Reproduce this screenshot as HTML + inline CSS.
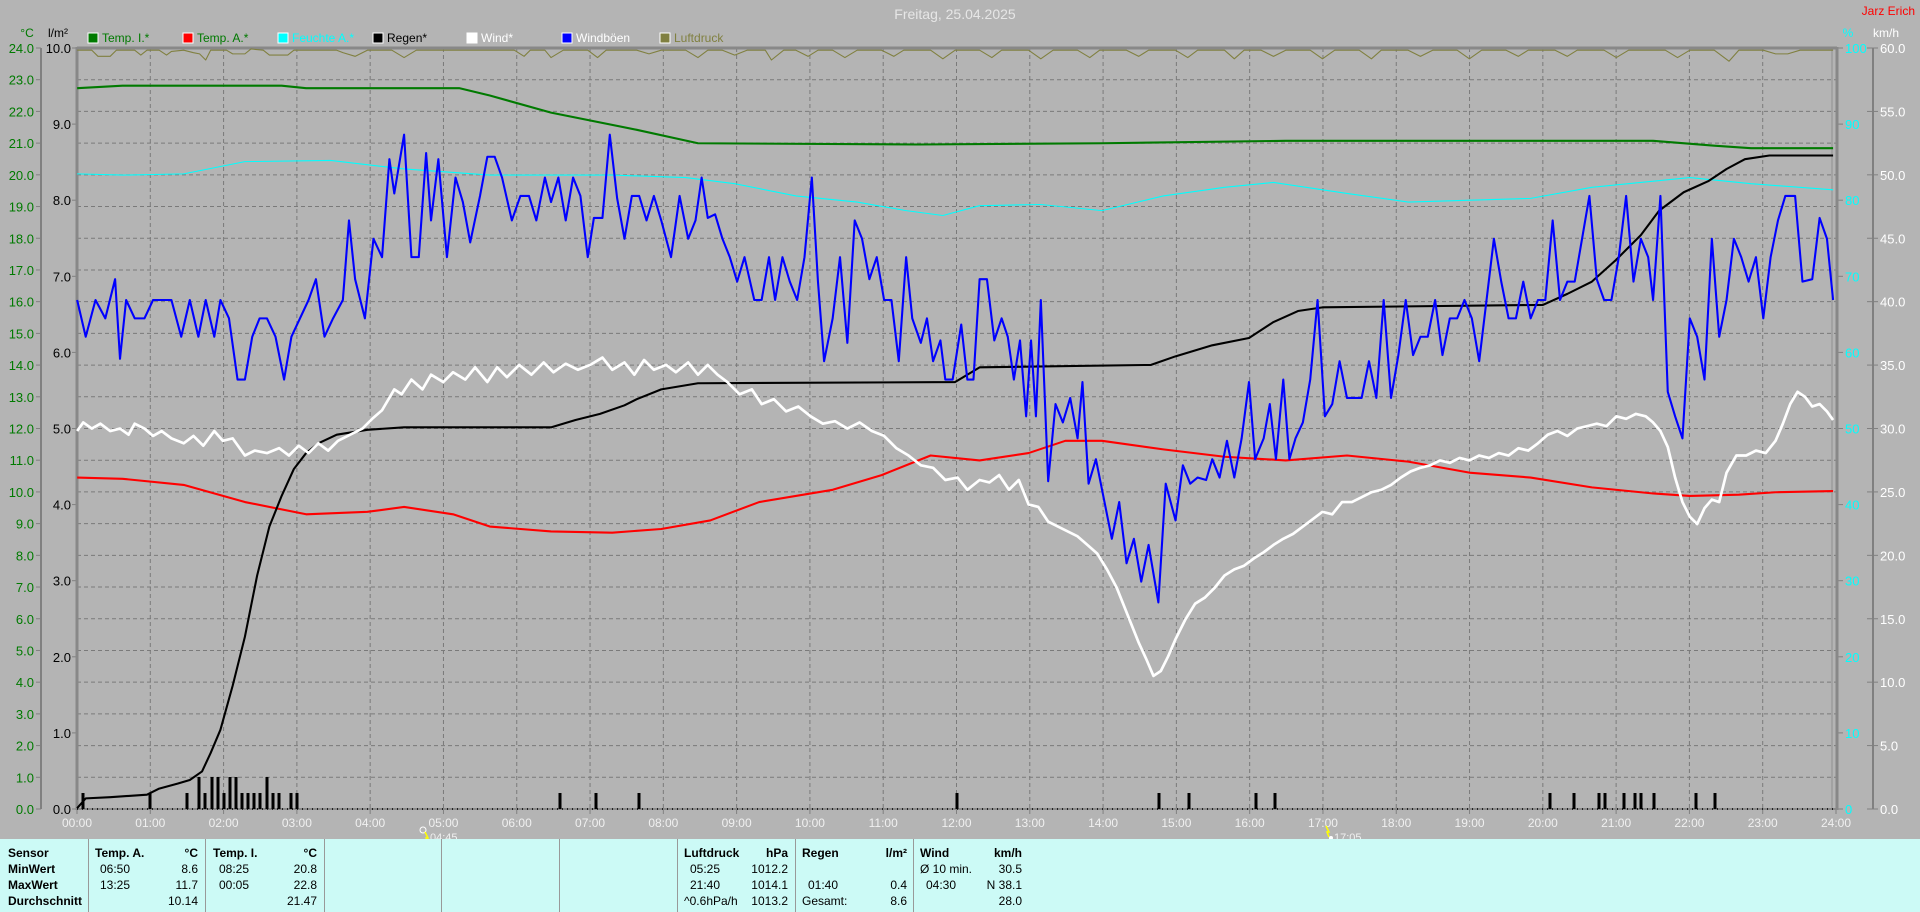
<!DOCTYPE html>
<html><head><meta charset="utf-8"><style>
body{margin:0;background:#b4b4b4;width:1920px;height:912px;overflow:hidden;font-family:"Liberation Sans",sans-serif}
svg{position:absolute;left:0;top:0}
#tbl{position:absolute;left:0;top:839px;width:1920px;height:73px;background:#ccfaf6;font-size:12px;color:#000}
.c{position:absolute;top:0;height:73px;border-left:1px solid #999}
.r{position:absolute;white-space:nowrap}
.b{font-weight:bold}
</style></head><body>
<svg width="1920" height="912" xmlns="http://www.w3.org/2000/svg" font-family="Liberation Sans, sans-serif">
<text x="955" y="19" font-size="14" fill="#e6e6e6" text-anchor="middle">Freitag, 25.04.2025</text>
<text x="1915" y="15" font-size="12" fill="#f00" text-anchor="end">Jarz Erich</text>
<text x="27" y="37" font-size="12" fill="#007a00" text-anchor="middle">°C</text>
<text x="58" y="37" font-size="12" fill="#000" text-anchor="middle">l/m²</text>
<text x="1848" y="37" font-size="12" fill="#0ff" text-anchor="middle">%</text>
<text x="1886" y="37" font-size="12" fill="#fff" text-anchor="middle">km/h</text>
<g font-size="12">
<rect x="88" y="33" width="10" height="10" fill="#007a00" stroke="#fff"/><text x="102" y="42" fill="#007a00">Temp. I.*</text>
<rect x="183" y="33" width="10" height="10" fill="#f00" stroke="#fff"/><text x="197" y="42" fill="#007a00">Temp. A.*</text>
<rect x="278" y="33" width="10" height="10" fill="#0ff" stroke="#fff"/><text x="292" y="42" fill="#0ff">Feuchte A.*</text>
<rect x="373" y="33" width="10" height="10" fill="#000" stroke="#fff"/><text x="387" y="42" fill="#000">Regen*</text>
<rect x="467" y="33" width="10" height="10" fill="#fff" stroke="#fff"/><text x="481" y="42" fill="#fff">Wind*</text>
<rect x="562" y="33" width="10" height="10" fill="#00f" stroke="#fff"/><text x="576" y="42" fill="#fff">Windböen</text>
<rect x="660" y="33" width="10" height="10" fill="#808040" stroke="#fff"/><text x="674" y="42" fill="#808040">Luftdruck</text>
</g>
<g stroke="#7a7a7a" stroke-dasharray="4,3" stroke-width="1" id="grid"></g>
<g id="axes"></g>
<line x1="41" y1="48" x2="41" y2="809" stroke="#808080" stroke-width="2"/>
<line x1="1873" y1="48" x2="1873" y2="809" stroke="#808080" stroke-width="2"/>
<line x1="1832" y1="48" x2="1832" y2="809" stroke="#909090" stroke-width="1"/>
<line x1="77" y1="48" x2="1837" y2="48" stroke="#888" stroke-width="3"/>
<line x1="77" y1="47" x2="77" y2="810" stroke="#888" stroke-width="3"/>
<line x1="1837" y1="47" x2="1837" y2="810" stroke="#888" stroke-width="3"/>
<line x1="77" y1="809" x2="1837" y2="809" stroke="#888" stroke-width="2"/>
<line x1="77" y1="809" x2="1837" y2="809" stroke="#000" stroke-width="1.5" stroke-dasharray="1,4"/>
<g fill="#000" id="bars"></g>
<g transform="scale(1.2245)" fill="none" stroke-linejoin="round">
<polyline stroke="#808040" stroke-width="0.9" points="63,41 75,41 80,46 90,46 95,41 110,41 115,45 120,41 130,41 136,45 140,42 150,41 158,43 163,44 168,49 172,41 185,41 190,44 200,44 205,40 215,41 220,45 235,45 240,41 250,41 260,41 275,41 280,43 290,46 300,41 320,41 330,47 340,41 360,41 380,41 400,41 420,41 428,46 433,41 445,41 450,47 460,41 480,41 488,47 495,41 520,41 530,44 540,41 560,41 570,47 578,41 590,41 600,45 610,41 625,41 630,49 640,41 650,41 660,46 668,41 680,41 690,47 700,41 720,41 730,46 738,41 760,41 770,48 780,41 800,41 810,47 818,41 840,41 850,48 860,41 880,41 890,47 898,41 920,41 930,46 938,41 960,41 970,47 978,41 1000,41 1008,48 1016,41 1030,41 1040,46 1050,41 1070,41 1080,48 1090,41 1110,41 1120,48 1128,41 1150,41 1160,46 1170,41 1190,41 1200,48 1210,41 1230,41 1240,46 1248,41 1270,41 1280,46 1288,41 1310,41 1320,47 1330,41 1360,41 1370,47 1380,41 1400,41 1412,50 1420,41 1440,41 1450,44 1460,44 1470,41 1497,41"/>
<polyline stroke="#0ff" stroke-width="0.9" points="63,142 100,143 150,142 200,132 270,131 330,138 400,143 500,143 560,145 600,150 650,160 700,165 740,172 770,176 800,168 850,167 900,172 950,160 1000,153 1040,149 1100,158 1150,165 1250,162 1300,153 1380,145 1430,150 1497,155"/>
<polyline stroke="#007a00" stroke-width="1.7" points="63,72 100,70 230,70 250,72 375,72 400,78 450,92 520,106 570,117 750,118 900,117 1050,115 1350,115 1400,119 1430,121 1497,121"/>
<polyline stroke="#f00" stroke-width="1.7" points="63,390 100,391 150,396 200,410 250,420 300,418 330,414 370,420 400,430 450,434 500,435 540,432 580,425 620,410 680,400 720,388 760,372 800,376 840,370 870,360 900,360 950,367 1000,373 1050,376 1100,372 1150,377 1200,386 1250,390 1300,398 1350,403 1380,405 1420,404 1450,402 1497,401"/>
<polyline stroke="#000" stroke-width="1.7" points="63,660 70,652 90,651 120,649 130,644 145,640 155,637 165,630 172,615 180,596 190,560 200,520 210,470 220,430 230,405 240,383 250,370 260,362 275,355 300,351 330,349 450,349 470,343 490,338 510,331 520,326 540,318 570,313 780,312 800,300 940,298 960,291 990,282 1020,276 1040,263 1060,254 1080,251 1260,249 1280,240 1300,230 1320,212 1340,192 1355,172 1375,157 1395,148 1410,138 1425,130 1445,127 1497,127"/>
<polyline stroke="#fff" stroke-width="2.2" points="63,352 68,345 75,350 82,346 90,352 98,350 105,355 110,346 118,350 125,356 132,352 140,358 150,362 158,356 166,364 175,352 182,360 190,358 200,372 208,368 218,370 228,366 236,372 244,364 252,370 260,362 268,368 276,360 286,355 296,350 304,342 312,335 322,318 328,322 336,310 345,318 352,306 362,312 370,304 380,310 388,300 398,312 406,300 414,308 424,298 434,306 444,296 452,304 462,297 472,302 482,298 492,292 500,302 510,296 518,306 526,294 534,302 544,298 552,304 562,296 570,306 578,298 586,306 594,312 604,322 614,318 622,330 632,326 642,336 652,332 662,340 672,346 682,344 692,350 702,345 712,352 722,356 732,366 742,372 752,380 762,382 772,392 782,390 790,400 800,392 808,394 816,388 824,400 832,392 840,412 848,414 856,426 864,430 872,434 880,438 888,445 896,452 904,465 912,480 918,495 924,510 930,525 936,538 942,552 948,548 954,536 960,522 968,506 976,493 984,488 992,480 1000,470 1008,465 1016,462 1024,456 1032,451 1040,445 1048,440 1056,436 1064,430 1072,424 1080,418 1088,420 1096,410 1104,410 1112,406 1120,402 1128,400 1136,396 1144,390 1152,385 1160,382 1168,380 1176,376 1184,378 1192,374 1200,376 1208,372 1216,374 1224,370 1232,372 1240,366 1248,368 1256,362 1264,355 1272,352 1280,356 1288,350 1296,348 1304,346 1312,348 1320,340 1328,342 1336,338 1344,340 1350,345 1356,352 1362,365 1368,390 1374,410 1380,422 1386,428 1392,415 1398,408 1404,410 1410,386 1418,372 1426,372 1434,368 1442,370 1450,360 1456,346 1462,330 1468,320 1474,324 1480,332 1486,330 1492,336 1497,343"/>
<polyline stroke="#00f" stroke-width="1.7" points="63,245 70,275 78,245 86,260 94,228 98,293 103,245 110,260 118,260 125,245 132,245 140,245 148,275 155,245 162,275 168,245 175,275 180,245 187,260 194,310 200,310 206,275 212,260 218,260 225,275 232,310 238,275 245,260 252,245 258,228 265,275 272,260 280,245 285,180 290,228 298,260 305,195 312,210 318,130 322,158 330,110 336,210 342,210 348,125 352,180 358,130 365,210 372,145 378,165 384,198 392,160 398,128 404,128 410,145 418,180 425,160 432,160 438,180 445,145 450,165 456,145 462,180 468,145 474,160 480,210 485,178 492,178 498,110 504,162 510,195 516,160 522,160 528,180 534,160 540,180 548,210 555,160 562,195 568,180 573,145 578,178 584,175 590,195 596,210 602,230 608,210 616,245 622,245 628,210 633,245 639,210 645,230 651,245 657,210 663,145 668,230 673,295 680,260 686,210 692,280 698,180 704,195 710,228 716,210 722,245 728,245 734,295 740,210 745,260 752,280 757,260 762,295 768,278 772,310 778,310 785,265 790,310 795,310 800,228 806,228 812,278 818,260 823,275 828,310 833,278 838,340 842,278 846,340 850,245 856,393 862,330 868,345 874,325 880,358 884,312 889,395 895,375 902,410 908,440 914,410 920,460 926,440 932,475 938,445 946,492 952,395 960,425 966,380 972,395 978,390 985,392 990,375 996,390 1002,360 1008,390 1014,358 1020,312 1025,375 1032,358 1037,330 1042,375 1048,310 1053,375 1058,358 1064,345 1070,310 1076,245 1082,340 1088,330 1094,295 1100,325 1106,325 1112,325 1118,295 1124,325 1130,245 1136,325 1142,290 1148,245 1154,290 1160,275 1166,275 1172,245 1178,290 1184,260 1190,260 1196,245 1202,260 1208,295 1214,245 1220,195 1226,230 1232,260 1238,260 1244,230 1250,260 1256,245 1262,245 1268,180 1274,245 1280,230 1286,230 1292,195 1298,160 1304,228 1310,245 1316,245 1322,210 1328,160 1334,230 1340,195 1346,210 1350,245 1356,160 1362,320 1368,340 1374,358 1380,260 1386,275 1392,310 1398,195 1404,275 1410,245 1416,195 1422,210 1428,230 1434,210 1440,260 1446,210 1452,180 1458,160 1466,160 1472,230 1480,228 1486,178 1492,195 1497,245"/>
</g>
<g font-size="11" fill="#f0f0f0">
<circle cx="423" cy="830" r="3" fill="none" stroke="#fff"/><path d="M425 832 l3 6 l-2 0 l2 5" stroke="#ff0" fill="none" stroke-width="1.5"/><text x="430" y="841">04:45</text>
<path d="M1326 826 l3 6 l-2 0 l2 5" stroke="#ff0" fill="none" stroke-width="1.5"/><circle cx="1331" cy="838" r="2" fill="#fff"/><text x="1334" y="841">17:05</text>
</g>
</svg>
<div id="tbl">
<div class="c" style="left:88px"></div><div class="c" style="left:205px"></div><div class="c" style="left:324px"></div><div class="c" style="left:441px"></div><div class="c" style="left:559px"></div><div class="c" style="left:677px"></div><div class="c" style="left:795px"></div><div class="c" style="left:913px"></div>
<div class="r b" style="left:8px;top:7px">Sensor</div><div class="r b" style="left:8px;top:23px">MinWert</div><div class="r b" style="left:8px;top:39px">MaxWert</div><div class="r b" style="left:8px;top:55px">Durchschnitt</div>
<div class="r b" style="left:95px;top:7px">Temp. A.</div><div class="r b" style="right:1722px;top:7px">°C</div>
<div class="r" style="left:100px;top:23px">06:50</div><div class="r" style="right:1722px;top:23px">8.6</div>
<div class="r" style="left:100px;top:39px">13:25</div><div class="r" style="right:1722px;top:39px">11.7</div>
<div class="r" style="right:1722px;top:55px">10.14</div>
<div class="r b" style="left:213px;top:7px">Temp. I.</div><div class="r b" style="right:1603px;top:7px">°C</div>
<div class="r" style="left:219px;top:23px">08:25</div><div class="r" style="right:1603px;top:23px">20.8</div>
<div class="r" style="left:219px;top:39px">00:05</div><div class="r" style="right:1603px;top:39px">22.8</div>
<div class="r" style="right:1603px;top:55px">21.47</div>
<div class="r b" style="left:684px;top:7px">Luftdruck</div><div class="r b" style="right:1132px;top:7px">hPa</div>
<div class="r" style="left:690px;top:23px">05:25</div><div class="r" style="right:1132px;top:23px">1012.2</div>
<div class="r" style="left:690px;top:39px">21:40</div><div class="r" style="right:1132px;top:39px">1014.1</div>
<div class="r" style="left:684px;top:55px">^0.6hPa/h</div><div class="r" style="right:1132px;top:55px">1013.2</div>
<div class="r b" style="left:802px;top:7px">Regen</div><div class="r b" style="right:1013px;top:7px">l/m²</div>
<div class="r" style="left:808px;top:39px">01:40</div><div class="r" style="right:1013px;top:39px">0.4</div>
<div class="r" style="left:802px;top:55px">Gesamt:</div><div class="r" style="right:1013px;top:55px">8.6</div>
<div class="r b" style="left:920px;top:7px">Wind</div><div class="r b" style="right:898px;top:7px">km/h</div>
<div class="r" style="left:920px;top:23px">Ø 10 min.</div><div class="r" style="right:898px;top:23px">30.5</div>
<div class="r" style="left:926px;top:39px">04:30</div><div class="r" style="right:898px;top:39px">N 38.1</div>
<div class="r" style="right:898px;top:55px">28.0</div>
</div>
<script>
var NS="http://www.w3.org/2000/svg";
function el(p,t,a,txt){var e=document.createElementNS(NS,t);for(var k in a)e.setAttribute(k,a[k]);if(txt!=null)e.textContent=txt;p.appendChild(e);return e;}
var g=document.getElementById("grid"),ax=document.getElementById("axes"),bars=document.getElementById("bars");
var X0=77,X1=1836,Y0=48,Y1=809,H=(X1-X0)/24;
for(var h=1;h<24;h++){var x=X0+H*h;el(g,"line",{x1:x,y1:Y0,x2:x,y2:Y1});}
for(var k=1;k<24;k++){var y=Y0+(Y1-Y0)*k/24;el(g,"line",{x1:X0,y1:y,x2:X1,y2:y});}
for(var k=0;k<=24;k++){var y=Y0+(Y1-Y0)*k/24;el(ax,"line",{x1:36,y1:y,x2:41,y2:y,stroke:"#808080"});el(ax,"text",{x:34,y:y+5,"font-size":13,fill:"#007a00","text-anchor":"end"},(24-k).toFixed(1));}
for(var k=0;k<=10;k++){var y=Y0+(Y1-Y0)*k/10;el(ax,"line",{x1:72,y1:y,x2:77,y2:y,stroke:"#808080"});el(ax,"text",{x:71,y:y+5,"font-size":13,fill:"#000","text-anchor":"end"},(10-k).toFixed(1));
el(ax,"line",{x1:1837,y1:y,x2:1843,y2:y,stroke:"#808080"});el(ax,"text",{x:1845,y:y+5,"font-size":13,fill:"#0ff"},String(100-k*10));}
for(var k=0;k<=12;k++){var y=Y0+(Y1-Y0)*k/12;el(ax,"line",{x1:1867,y1:y,x2:1878,y2:y,stroke:"#808080"});el(ax,"text",{x:1880,y:y+5,"font-size":13,fill:"#fff"},(60-k*5).toFixed(1));}
for(var h=0;h<=24;h++){var x=X0+H*h;el(ax,"line",{x1:x,y1:809,x2:x,y2:814,stroke:"#808080"});el(ax,"text",{x:x,y:827,"font-size":12,fill:"#f0f0f0","text-anchor":"middle"},(h<10?"0":"")+h+":00");}
var bx=[83,150,187,199,205,212,218,224,230,236,242,248,254,260,267,273,279,291,297,560,596,639,957,1159,1189,1256,1275,1550,1574,1599,1605,1624,1635,1641,1654,1696,1715];
var tall=[199,212,218,230,236,267];
bx.forEach(function(x){var t=tall.indexOf(x)>=0;el(bars,"rect",{x:x-1.5,y:t?777:793,width:3,height:t?32:16});});
</script>
</body></html>
